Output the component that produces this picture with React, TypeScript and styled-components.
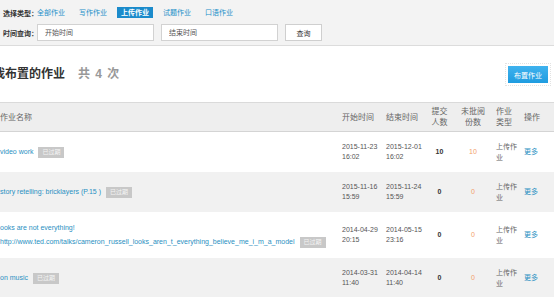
import React from 'react'
import styled, { createGlobalStyle } from 'styled-components'

const GlobalStyle = createGlobalStyle`
  html, body {
    margin: 0;
    padding: 0;
    background: #fff;
    overflow: hidden;
  }
  body {
    font-family: "Liberation Sans", Arial, "Noto Sans CJK SC", sans-serif;
    color: #333;
  }
  * { box-sizing: border-box; }
`

const Page = styled.div`
  width: 554px;
  overflow: hidden;
`

const FilterPanel = styled.div`
  background: #f3f3f3;
  border-bottom: 1px solid #dcdcdc;
  padding: 7px 0 4px 3px;
  display: flex;
  flex-direction: column;
  gap: 6px;
`

const FilterRow = styled.div`
  display: flex;
  align-items: center;
`

const Label = styled.span`
  width: 34px;
  font-size: 7px;
  font-weight: bold;
  color: #333;
  white-space: nowrap;
`

const Tabs = styled.ul`
  display: flex;
  gap: 6px;
  margin: 0 0 0 -4px;
  padding: 0;
  list-style: none;
`

const Tab = styled.li<{ $active?: boolean }>`
  height: 11px;
  line-height: 11px;
  padding: 0 4px;
  font-size: 7px;
  color: ${p => (p.$active ? '#fff' : '#1a8fc9')};
  background: ${p => (p.$active ? '#1b8bcb' : 'transparent')};
  font-weight: ${p => (p.$active ? 'bold' : 'normal')};
  cursor: pointer;
`

const DateInput = styled.input<{ $w: number }>`
  width: ${p => p.$w}px;
  height: 17px;
  border: 1px solid #d2d2d2;
  background: #fff;
  padding: 0 0 0 7px;
  margin-right: 7px;
  font-size: 7px;
  font-family: inherit;
  outline: none;
  &::placeholder {
    color: #555;
  }
`

const SearchButton = styled.button`
  width: 37px;
  height: 17px;
  border: 1px solid #cfcfcf;
  background: #fff;
  font-size: 7px;
  font-family: inherit;
  color: #333;
  padding: 0;
`

const TitleRow = styled.div`
  display: flex;
  align-items: center;
  justify-content: space-between;
  margin-left: -7px;
  padding: 20px 6px 19px 0;
`

const Title = styled.h2`
  margin: 0;
  font-size: 12px;
  line-height: 17px;
  font-weight: bold;
  color: #333;
`

const Count = styled.span`
  margin-left: 13px;
  color: #999;
  word-spacing: 2px;
`

const AssignButton = styled.button`
  width: 40px;
  height: 17px;
  border: none;
  padding: 0;
  background: linear-gradient(#3fb2ee, #1f9ce0);
  color: #fff;
  font-size: 7px;
  font-family: inherit;
  outline: 1px dotted #e2e2e2;
  outline-offset: 2px;
`

const Table = styled.div`
  margin-left: -8px;
  width: 562px;
`

const cols = '343px 44px 45px 31px 36px 30px 1fr'

const HeadRow = styled.div`
  display: grid;
  grid-template-columns: ${cols};
  align-items: center;
  background: #eeeeee;
  border-top: 1px solid #dadada;
  border-bottom: 1px solid #d4d4d4;
`

const Row = styled.div<{ $shaded?: boolean }>`
  display: grid;
  grid-template-columns: ${cols};
  align-items: center;
  background: ${p => (p.$shaded ? '#f1f1f1' : '#fff')};
`

const Th = styled.div<{ $pad?: number; $center?: boolean }>`
  padding: 3px 0 3px ${p => (p.$center ? 0 : p.$pad ?? 7)}px;
  text-align: ${p => (p.$center ? 'center' : 'left')};
  font-size: 8px;
  line-height: 11px;
  color: #666;
`

const Td = styled.div<{ $pad?: number; $center?: boolean }>`
  padding: 9px 0 9px ${p => (p.$center ? 0 : p.$pad ?? 7)}px;
  text-align: ${p => (p.$center ? 'center' : 'left')};
  font-size: 7px;
  line-height: 10.5px;
  color: #555;
`

const NameCell = styled(Td)`
  line-height: 14px;
  padding-left: 8px;
`

const Link = styled.a`
  color: #2a90c2;
  text-decoration: none;
`

const Badge = styled.span`
  display: inline-block;
  margin-left: 5px;
  padding: 0 4px;
  height: 11px;
  line-height: 11px;
  font-size: 6px;
  color: #f5f5f5;
  background: #c8c8c8;
  vertical-align: middle;
`

const Num = styled.span<{ $orange?: boolean }>`
  font-weight: ${p => (p.$orange ? 'normal' : 'bold')};
  color: ${p => (p.$orange ? '#f3a06b' : '#333')};
`

const TypeCell = styled(Td)`
  line-height: 11px;
  color: #666;
  padding-left: 5px;
`

type Item = {
  title: string[]
  start: [string, string]
  end: [string, string]
  submitted: number
  unread: number
}

const items: Item[] = [
  {
    title: ['video work'],
    start: ['2015-11-23', '16:02'],
    end: ['2015-12-01', '16:02'],
    submitted: 10,
    unread: 10,
  },
  {
    title: ['story retelling: bricklayers (P.15 )'],
    start: ['2015-11-16', '15:59'],
    end: ['2015-11-24', '15:59'],
    submitted: 0,
    unread: 0,
  },
  {
    title: [
      'ooks are not everything!',
      'http://www.ted.com/talks/cameron_russell_looks_aren_t_everything_believe_me_i_m_a_model',
    ],
    start: ['2014-04-29', '20:15'],
    end: ['2014-05-15', '23:16'],
    submitted: 0,
    unread: 0,
  },
  {
    title: ['on music'],
    start: ['2014-03-31', '11:40'],
    end: ['2014-04-14', '11:40'],
    submitted: 0,
    unread: 0,
  },
]

const tabs = ['全部作业', '写作作业', '上传作业', '试题作业', '口语作业']

export default function App() {
  return (
    <Page>
      <GlobalStyle />
      <FilterPanel>
        <FilterRow>
          <Label>选择类型：</Label>
          <Tabs>
            {tabs.map(t => (
              <Tab key={t} $active={t === '上传作业'}>{t}</Tab>
            ))}
          </Tabs>
        </FilterRow>
        <FilterRow>
          <Label>时间查询：</Label>
          <DateInput $w={117} placeholder="开始时间" />
          <DateInput $w={117} placeholder="结束时间" />
          <SearchButton>查询</SearchButton>
        </FilterRow>
      </FilterPanel>

      <TitleRow>
        <Title>
          我布置的作业<Count>共 4 次</Count>
        </Title>
        <AssignButton>布置作业</AssignButton>
      </TitleRow>

      <Table>
        <HeadRow>
          <Th $pad={8}>作业名称</Th>
          <Th>开始时间</Th>
          <Th>结束时间</Th>
          <Th $center>提交<br />人数</Th>
          <Th $center>未批阅<br />份数</Th>
          <Th $pad={5}>作业<br />类型</Th>
          <Th $pad={3}>操作</Th>
        </HeadRow>
        {items.map((it, i) => (
          <Row key={i} $shaded={i % 2 === 1}>
            <NameCell>
              {it.title.map((line, j) => (
                <React.Fragment key={j}>
                  {j > 0 && <br />}
                  <Link href="#">{line}</Link>
                </React.Fragment>
              ))}
              <Badge>已过期</Badge>
            </NameCell>
            <Td>{it.start[0]}<br />{it.start[1]}</Td>
            <Td>{it.end[0]}<br />{it.end[1]}</Td>
            <Td $center><Num>{it.submitted}</Num></Td>
            <Td $center><Num $orange>{it.unread}</Num></Td>
            <TypeCell>上传作业</TypeCell>
            <Td $pad={3}><Link href="#">更多</Link></Td>
          </Row>
        ))}
      </Table>
    </Page>
  )
}
